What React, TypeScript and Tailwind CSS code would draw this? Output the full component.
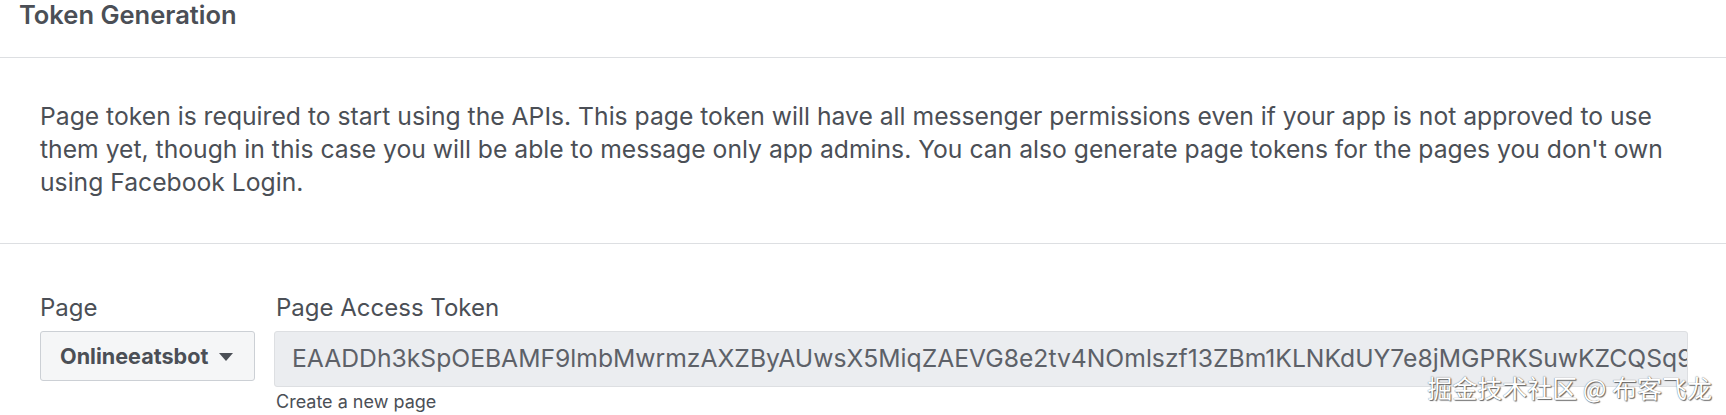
import React from "react";

const FONT = { fontFamily: "Inter, 'Noto Sans', 'Liberation Sans', sans-serif" };

export default function App() {
  const token =
    "EAADDh3kSpOEBAMF9lmbMwrmzAXZByAUwsX5MiqZAEVG8e2tv4NOmlszf13ZBm1KLNKdUY7e8jMGPRKSuwKZCQSq9ZBvZCZDZDxKq";
  return (
    <div className="relative h-[415px] w-full overflow-hidden bg-white text-[#4b4f56]" style={FONT}>
      <div className="h-[58px] border-b border-[#dddfe2] pl-[19px]">
        <h2 className="text-[25.5px] font-semibold leading-[29px] text-[#4b4f56]">Token Generation</h2>
      </div>

      <div className="border-b border-[#dddfe2] pl-10 pr-[38px] pt-[42px] pb-[44px]">
        <p className="whitespace-nowrap text-[24.7px] leading-[33px] text-[#4b4f56]">
          Page token is required to start using the APIs. This page token will have all messenger permissions even if your app is not approved to use
          <br />
          them yet, though in this case you will be able to message only app admins. You can also generate page tokens for the pages you don't own
          <br />
          using Facebook Login.
        </p>
      </div>

      <div className="flex gap-[19px] pl-10 pr-[38px] pt-[47px]">
        <div className="flex w-[215px] shrink-0 flex-col">
          <label className="text-[24px] leading-[33px] text-[#4b4f56]">Page</label>
          <button className="mt-[7px] flex h-[50px] items-center gap-[11px] rounded-[3px] border border-[#ccd0d5] bg-[#f5f6f7] pl-[19px] text-[21.6px] font-bold text-[#4b4f56]">
            <span>Onlineeatsbot</span>
            <svg width="14" height="8" viewBox="0 0 14 8" className="mt-[1px]">
              <path d="M0 0 H14 L7 8 Z" fill="#4b4f56" />
            </svg>
          </button>
        </div>
        <div className="flex min-w-0 flex-1 flex-col">
          <label className="pl-[2px] text-[24px] leading-[33px] text-[#4b4f56]">Page Access Token</label>
          <div className="mt-[7px] flex h-[56px] items-center overflow-hidden whitespace-nowrap rounded-[3px] border border-[#dddfe2] bg-[#ebedf0] pl-[17px] text-[24.7px] text-[#5d6168]">
            {token}
          </div>
          <div className="pl-[2px] pt-[3px] text-[18px] leading-[24px] text-[#4b4f56]">Create a new page</div>
        </div>
      </div>

      <div
        className="absolute bottom-[14px] right-[14px] text-[25px] leading-[28px] text-white [text-shadow:0_0_1px_#555,1px_1px_1px_#666]"
        style={{ fontFamily: "'Noto Sans CJK SC', 'Noto Sans', sans-serif" }}
      >
        掘金技术社区 @ 布客飞龙
      </div>
    </div>
  );
}
